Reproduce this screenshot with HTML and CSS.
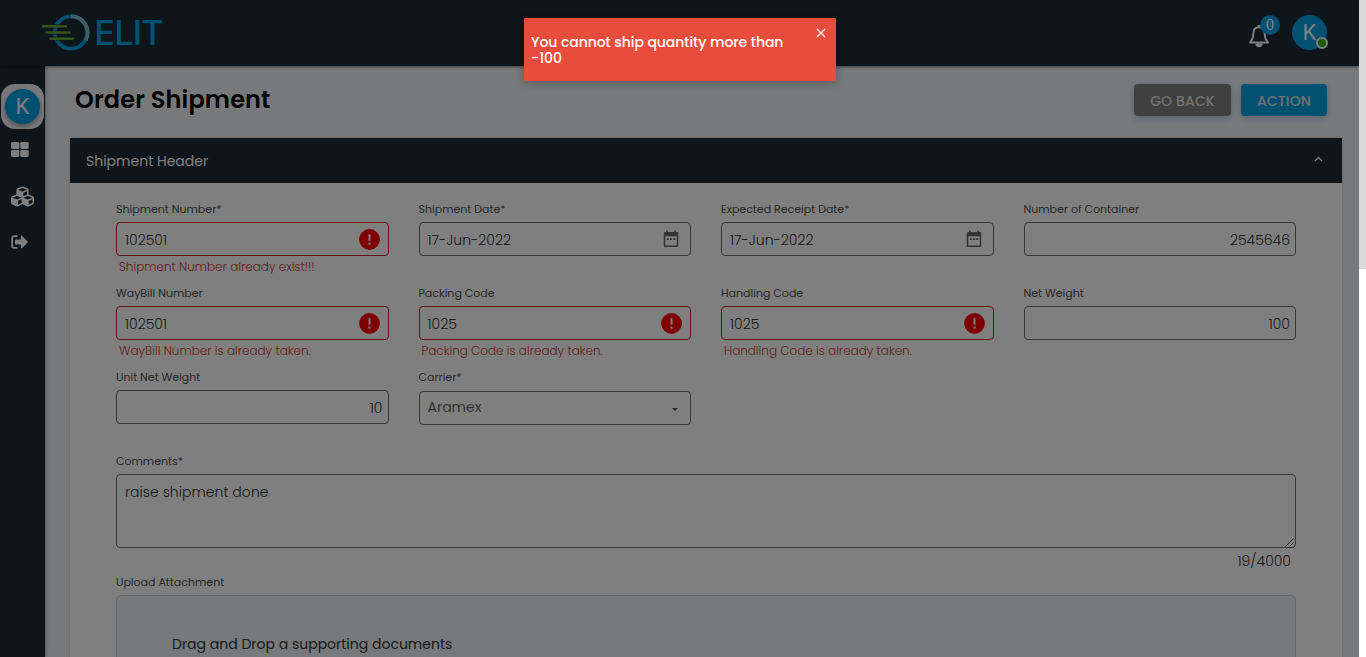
FILE: index.html
```
<!DOCTYPE html>
<html lang="en">
<head>
<meta charset="utf-8">
<title>Order Shipment</title>
<link rel="stylesheet" href="styles.css">
</head>
<body>
<svg class="defs" width="0" height="0" aria-hidden="true">
  <symbol id="alert" viewBox="0 0 21 21"><circle cx="10.5" cy="10.5" r="10.4" fill="#ff0000"/><path d="M10.5 5.200v6.500M10.500 13.600v2.100" stroke="#fff" stroke-width="2"/></symbol>
  <symbol id="calendar" viewBox="0 0 16 18"><path d="M1.5 3h13v13.3h-13z" fill="none" stroke="#666" stroke-width="1.5" stroke-linejoin="round"/><path d="M1 2.6h14v3.6H1zM3 .4h1.7v3H3zM11.3.4H13v3h-1.7zM3.8 8.2h2v1.9h-2zM7 8.2h2v1.9H7zM10.2 8.2h2v1.9h-2z" fill="#666"/></symbol>
</svg>
<div class="app">
  <header class="topbar">
    <svg class="logo" width="124" height="42" viewBox="0 0 124 42">
      <circle cx="29" cy="20.5" r="16.2" fill="none" stroke="#00a0e3" stroke-width="3.8"/>
      <path d="M29 4.3A16.2 16.2 0 0 1 43.8 28" fill="none" stroke="#80bfc6" stroke-width="3.8"/>
      <path d="M1 14.3h23M4.6 20.6h23M8.4 26.8h22.4" stroke="#1c2a36" stroke-width="4.500" opacity=".5"/>
      <path d="M1 14.3h23M4.6 20.6h23M8.4 26.8h22.4" stroke="#65a82e" stroke-width="2.5" stroke-linecap="round"/>
      <text class="logo-text" x="52.300" y="33" textLength="69.500" lengthAdjust="spacing">ELIT</text>
    </svg>
    <div class="topbar-right">
      <div class="bell">
        <svg width="22" height="24" viewBox="0 0 22 24"><path d="M11 3.2c-4 0-5.6 3-5.6 6.2 0 4-.9 6.200-3.400 9.100h18c-2.500-2.900-3.400-5.100-3.400-9.100 0-3.200-1.600-6.200-5.600-6.200z" fill="none" stroke="#fff" stroke-width="1.9" stroke-linejoin="round"/><path d="M7.300 19.500a3.700 3.700 0 0 0 7.400 0zM9.700 1h2.600v2.500H9.700z" fill="#fff"/></svg>
        <span class="badge">0</span>
      </div>
      <div class="avatar">K<span class="online"></span></div>
    </div>
  </header>
  <div class="below">
    <nav class="sidebar">
      <div class="side-user"><div class="avatar">K</div></div>
      <svg class="nav-grid" width="18" height="15" viewBox="0 0 18 15"><g fill="#fff"><rect width="8.400" height="7" rx="1.300"/><rect x="9.300" width="8.400" height="7" rx="1.300"/><rect y="7.900" width="8.400" height="7" rx="1.300"/><rect x="9.300" y="7.900" width="8.400" height="7" rx="1.300"/></g></svg>
      <svg class="nav-cubes" width="23" height="23" viewBox="0 0 512 512"><path fill="#fff" d="M488.600 250.200L392 214V105.500c0-15-9.300-28.400-23.400-33.700l-100-37.500c-8.100-3.100-17.100-3.100-25.300 0l-100 37.500c-14.100 5.300-23.400 18.700-23.400 33.700V214l-96.600 36.200C9.300 255.500 0 268.900 0 283.900V394c0 13.600 7.700 26.100 19.900 32.200l100 50c10.100 5.100 22.100 5.100 32.200 0l103.900-52 103.900 52c10.100 5.100 22.100 5.100 32.200 0l100-50c12.200-6.100 19.900-18.600 19.900-32.200V283.900c0-15-9.300-28.400-23.400-33.700zM358 214.800l-85 31.900v-68.200l85-37v73.300zM154 104.100l102-38.200 102 38.200v.6l-102 41.400-102-41.400v-.6zm84 291.100l-85 42.500v-79.100l85-38.800v75.400zm0-112l-102 41.400-102-41.400v-.6l102-38.200 102 38.200v.6zm240 112l-85 42.500v-79.100l85-38.800v75.400zm0-112l-102 41.400-102-41.400v-.6l102-38.200 102 38.200v.6z"/></svg>
      <svg class="nav-exit" width="18" height="14" viewBox="0 0 18 14"><path d="M6.500 1.200H3A1.800 1.800 0 0 0 1.200 3v8A1.800 1.800 0 0 0 3 12.800h3.500" fill="none" stroke="#fff" stroke-width="1.800"/><path d="M4.800 4.600h5V1.300c0-.7.600-.9 1.100-.5l5.500 5.500c.4.400.4 1 0 1.400l-5.500 5.500c-.5.400-1.100.2-1.100-.5V9.400h-5c-.5 0-.8-.3-.8-.8V5.400c0-.5.300-.8.800-.8z" fill="#fff"/></svg>
    </nav>
    <main class="content">
      <div class="title-row">
        <h1>Order Shipment</h1>
        <div class="buttons"><button class="btn back">GO BACK</button><button class="btn action">ACTION</button></div>
      </div>
      <section class="card">
        <div class="card-head"><span>Shipment Header</span><svg width="9" height="6" viewBox="0 0 9 6"><path d="M1 5l3.500-3.600L8 5" fill="none" stroke="#fff" stroke-width="1.300"/></svg></div>
        <div class="card-body">
          <div class="grid">
            <div class="field error"><label>Shipment Number*</label><div class="input"><span>102501</span><svg class="alert"><use href="#alert"/></svg></div><p>Shipment Number already exist!!!</p></div>
            <div class="field"><label>Shipment Date*</label><div class="input"><span class="date">17-Jun-2022</span><svg class="cal"><use href="#calendar"/></svg></div></div>
            <div class="field"><label>Expected Receipt Date*</label><div class="input"><span class="date">17-Jun-2022</span><svg class="cal"><use href="#calendar"/></svg></div></div>
            <div class="field"><label>Number of Container</label><div class="input number"><span>2545646</span></div></div>
            <div class="field error"><label>WayBill Number</label><div class="input"><span>102501</span><svg class="alert"><use href="#alert"/></svg></div><p>WayBill Number is already taken.</p></div>
            <div class="field error"><label>Packing Code</label><div class="input"><span>1025</span><svg class="alert"><use href="#alert"/></svg></div><p>Packing Code is already taken.</p></div>
            <div class="field error"><label>Handling Code</label><div class="input"><span>1025</span><svg class="alert"><use href="#alert"/></svg></div><p>Handling Code is already taken.</p></div>
            <div class="field"><label>Net Weight</label><div class="input number"><span>100</span></div></div>
            <div class="field"><label>Unit Net Weight</label><div class="input number"><span>10</span></div></div>
            <div class="field carrier"><label>Carrier*</label><div class="input"><span>Aramex</span><i class="caret"></i></div></div>
          </div>
          <div class="field comments"><label>Comments*</label><div class="area"><span>raise shipment done</span><svg width="9" height="9" viewBox="0 0 9 9"><path d="M.5 8.500l8-8M4.500 8.500l4-4" stroke="#444" stroke-width="1"/></svg></div><div class="count">19/4000</div></div>
          <div class="field upload"><label>Upload Attachment</label><div class="drop">Drag and Drop a supporting documents</div></div>
        </div>
      </section>
    </main>
  </div>
  <div class="overlay"></div>
</div>
<div class="scrollbar"><div class="thumb"></div></div>
<div class="toast"><span>You cannot ship quantity more than<br>-100</span><svg width="10" height="10" viewBox="0 0 10 10"><path d="M1 1l8 8M9 1L1 9" stroke="#fff" stroke-width="1.300"/></svg></div>
</body>
</html>
```
FILE: styles.css
```
* { box-sizing: border-box; }
body { margin: 0; height: 657px; overflow: hidden; display: flex; font-family: Poppins, Inter, sans-serif; background: #fff; }
.defs { position: absolute; }
.app { position: relative; width: 1359px; height: 657px; overflow: hidden; background: #f0f3f7; }
.overlay { position: absolute; inset: 0; z-index: 5; background: rgba(0, 0, 0, .5); }
.scrollbar { width: 7px; height: 657px; background: #fff; }
.thumb { height: 269px; background: #dadada; }
.topbar { position: relative; z-index: 2; height: 66px; background: #1c2a36; display: flex; justify-content: space-between; box-shadow: 0 1px 3px rgba(0, 0, 0, .5); }
.logo { margin: 12px 0 0 42px; }
.logo-text { font: 500 34.500px Inter, sans-serif; fill: #00a0e3; }
.topbar-right { display: flex; margin: 15px 32px 0 0; gap: 22px; }
.bell { position: relative; width: 22px; padding-top: 9px; }
.badge { position: absolute; left: 12px; top: 0; width: 20px; height: 20px; border-radius: 50%; background: #00a0e3; color: #fff; font: 16px/20px "Liberation Serif", serif; text-align: center; }
.avatar { position: relative; width: 35px; height: 35px; border-radius: 50%; background: #00a0e3; color: #fff; font: 400 22px/36px Roboto, sans-serif; text-align: center; }
.online { position: absolute; right: -1px; bottom: 1px; width: 12px; height: 12px; border-radius: 50%; background: #3ab400; border: 2px solid #fff; }
.below { display: flex; height: 591px; }
.sidebar { width: 45px; flex: none; background: #1c2a36; display: flex; flex-direction: column; box-shadow: 1px 0 3px rgba(0, 0, 0, .3); }
.side-user { width: 43px; height: 45px; margin: 18px 0 0 1px; padding: 5px 4px; border-radius: 14px; background: #f0f0f4; }
.side-user .avatar { box-shadow: 0 2px 4px rgba(0, 0, 0, .4); }
.nav-grid { margin: 13px 0 0 11px; }
.nav-cubes { margin: 28px 0 0 11px; }
.nav-exit { margin: 27px 0 0 11px; }
.content { flex: 1; padding: 18px 17px 0 25px; }
.title-row { display: flex; justify-content: space-between; height: 54px; padding: 0 15px 0 5px; }
h1 { margin: 0; font-size: 24px; line-height: 32px; font-weight: 600; letter-spacing: .14px; color: #000; white-space: nowrap; }
.buttons { display: flex; gap: 10px; }
.btn { height: 32px; padding: 2px 0 0; border: 0; border-radius: 4px; color: #e0e0e0; font: 500 14px Poppins, Inter, sans-serif; letter-spacing: .15px; box-shadow: 0 2px 6px rgba(80, 110, 190, .4); }
.back { width: 97px; background: #808080; }
.action { width: 86px; background: #00a0e3; }
.card { background: #fff; box-shadow: 0 0 3px rgba(0, 0, 0, .15); height: 600px; }
.card-head { height: 45px; background: #1c2a36; color: #fff; display: flex; justify-content: space-between; padding: 0 19px 0 16px; font-size: 14px; line-height: 46px; }
.card-head svg { margin: 18px 0 0; }
.card-body { padding: 18px 46px 0; }
.grid { display: grid; grid-template-columns: repeat(4, 1fr); column-gap: 30px; grid-auto-rows: 84px; }
.field label { display: block; height: 21px; font-size: 11px; line-height: 16px; color: #505050; white-space: nowrap; }
.input { height: 34px; border: 1px solid #707070; border-radius: 4px; display: flex; justify-content: space-between; align-items: center; padding: 2px 8px 0 8px; font-size: 14px; font-weight: 300; color: #333; }
.error .input { border-color: #c62828; }
.error p { margin: 1px 0 0 3px; font-size: 12px; line-height: 20px; font-weight: 300; letter-spacing: -.02px; color: #cf4038; white-space: nowrap; }
.alert { width: 21px; height: 21px; margin-top: -2px; }
.cal { width: 16px; height: 18px; margin: -2px 3px 0 0; }
.input.number { justify-content: flex-end; padding-right: 5px; }
.carrier .input { margin-top: 22px; padding: 0 12px 0 8px; font-weight: 400; color: #666; }
.carrier .input span { margin-top: -1px; }
.carrier label { height: 16px; margin-bottom: -16px; }
.caret { border: 3.500px solid transparent; border-top-color: #555; border-bottom: 0; margin-top: 2px; }
.area { height: 74px; border: 1px solid #707070; border-radius: 4px; padding: 7px 1px 0 8px; display: flex; justify-content: space-between; font-size: 14px; font-weight: 300; letter-spacing: .04px; color: #333; }
.area svg { align-self: flex-end; }
.count { text-align: right; font-size: 14px; font-weight: 300; line-height: 26px; padding-right: 5px; color: #333; }
.drop { height: 120px; border: 1px solid #c4c8cc; border-radius: 5px; background: #f0f3f7; padding: 38px 0 0 55px; font-size: 14px; line-height: 20px; color: #333; }
.toast { position: absolute; z-index: 10; left: 524px; top: 18px; width: 312px; height: 63px; display: flex; justify-content: space-between; padding: 16px 10px 0 7px; background: #e84c3d; color: #fff; font-size: 14px; line-height: 16px; font-weight: 500; letter-spacing: -.06px; border-radius: 1px; box-shadow: 0 2px 8px rgba(0, 0, 0, .25); }
.toast svg { margin-top: -6px; }
```
